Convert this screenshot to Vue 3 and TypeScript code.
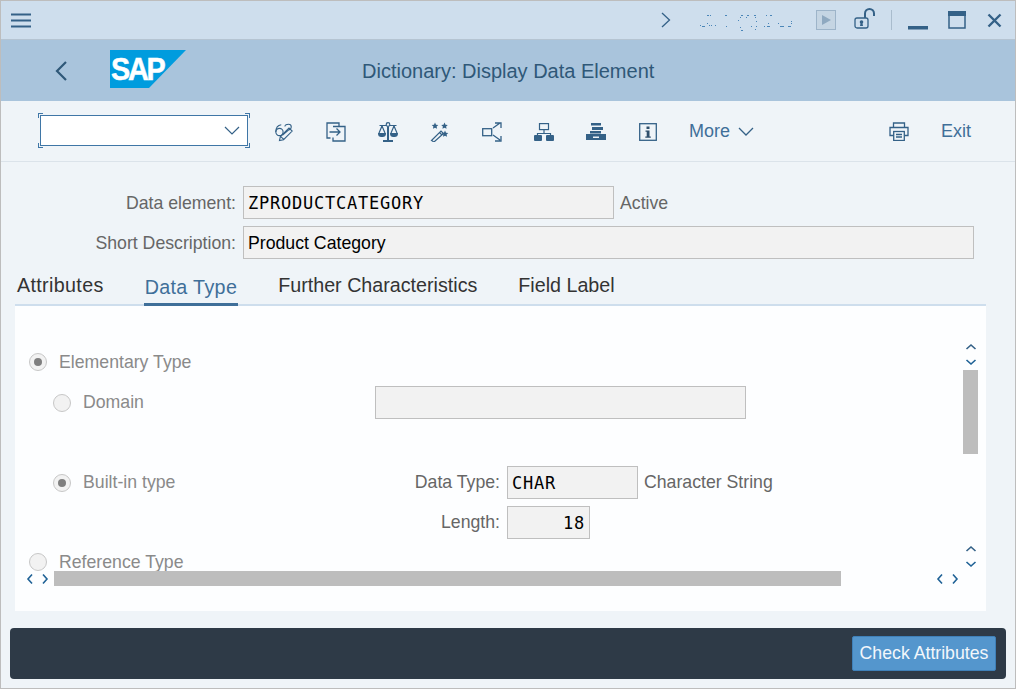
<template>
  <div class="window">
    <header class="titlebar">
      <svg class="menu" width="20" height="15" viewBox="0 0 20 15"><path d="M0 1.500h20M0 7.500h20M0 13.500h20" stroke="#346187" stroke-width="2" /></svg>
      <div class="spacer"></div>
      <svg class="next" width="10" height="16" viewBox="0 0 10 16"><path d="M1 1l7.500 7L1 15" fill="none" stroke="#346187" stroke-width="1.300" /></svg>
      <svg class="status" width="94" height="22" viewBox="0 0 94 22">
        <rect v-for="(d, i) in statusDots" :key="i" :x="d[0]" :y="d[1]" :width="d[2]" height="1" fill="#4b86b8" />
      </svg>
      <svg class="play" width="20" height="20" viewBox="0 0 20 20"><rect x=".5" y=".5" width="19" height="19" fill="#c5d5e3" stroke="#9db4c9" /><path d="M6 5l9 5-9 5z" fill="#8fa9c0" /></svg>
      <svg class="lock" width="22" height="22" viewBox="0 0 22 22"><path d="M11 10V5.500a4.500 4.500 0 0 1 9 0V8" fill="none" stroke="#346187" stroke-width="2" /><rect x="1" y="10" width="13" height="10" rx="2" fill="none" stroke="#346187" stroke-width="1.300" /><circle cx="7.500" cy="14" r="1.800" fill="#346187" /><path d="M6 18l.8-4h1.400l.8 4z" fill="#346187" /></svg>
      <span class="divider"></span>
      <svg class="minimize" width="20" height="4" viewBox="0 0 20 4"><rect width="20" height="3.500" fill="#346187" /></svg>
      <svg class="maximize" width="18" height="18" viewBox="0 0 18 18"><rect x="1" y="1" width="16" height="16" fill="none" stroke="#346187" stroke-width="1.500" /><rect x="0" y="0" width="18" height="5" fill="#346187" /></svg>
      <svg class="close" width="15" height="15" viewBox="0 0 15 15"><path d="M1.500 1.500l12 12M13.500 1.500l-12 12" stroke="#346187" stroke-width="2.400" /></svg>
    </header>

    <div class="appbar">
      <svg class="back" width="12" height="20" viewBox="0 0 12 20"><path d="M11 1L2 10l9 9" fill="none" stroke="#2f5878" stroke-width="2.200" /></svg>
      <div class="logo">
        <svg class="logo-bg" width="76" height="38" viewBox="0 0 76 38"><path d="M0 0h76L39 38H0z" fill="#009cde" /></svg>
        <span>SAP</span>
      </div>
      <h1>Dictionary: Display Data Element</h1>
    </div>

    <div class="toolbar">
      <div class="combo">
        <i class="tick tl"></i><i class="tick tr"></i><i class="tick bl"></i><i class="tick br"></i>
        <svg width="16" height="9" viewBox="0 0 16 9"><path d="M1 1l7 7 7-7" fill="none" stroke="#346187" stroke-width="1.200" /></svg>
      </div>
      <button class="tool">
        <svg width="22" height="20" viewBox="0 0 22 20" fill="none" stroke="#346187" stroke-width="1.200"><circle cx="6" cy="10" r="4" /><path d="M2 10C2 6 4 2.500 8 2M12 4c0-2 2-2.500 4-2.500s3 1.500 3 3-1 2.500-2 3.500" /><path d="M6 19.500l1-4.500 9.500-9.500 3.500 3.500-9.500 9.500zM7.500 15l3.500 3.500M9.500 13.500l8-7" /></svg>
      </button>
      <button class="tool">
        <svg width="20" height="20" viewBox="0 0 20 20" fill="none" stroke="#346187" stroke-width="1.300"><path d="M13 4.500V1H1v15h3.500" /><path d="M7 4.500h12V19H7v-3.500" /><path d="M3.500 10H14M10.500 6.500L14 10l-3.500 3.500" /></svg>
      </button>
      <button class="tool">
        <svg width="20" height="20" viewBox="0 0 20 20" fill="none" stroke="#346187" stroke-width="1.200"><circle cx="10" cy="2.500" r="1.800" /><path d="M10 4.500V18M5 19h10" stroke-width="2" /><path d="M1.500 3.500l6.500 0M12 3.500h6.500M4 4L1 11M4 4l3 7M16 4l-3 7M16 4l3 7" /><path d="M0 11h8c0 3-1 4-4 4s-4-1-4-4zM12 11h8c0 3-1 4-4 4s-4-1-4-4z" fill="#346187" stroke="none" /></svg>
      </button>
      <button class="tool">
        <svg width="20" height="20" viewBox="0 0 20 20" fill="none" stroke="#346187"><path d="M1.500 18.500L11 9l2.500 2.500L4 20z" stroke-width="1.200" /><path d="M9.500 10.500l2.500 2.500" stroke-width="1.200" /><path d="M5 .5l1 2.200 2.300.3-1.700 1.500.5 2.300L5 5.800 2.900 6.800l.5-2.300L1.700 3l2.300-.3zM14.500.5l1 2.200 2.300.3-1.700 1.500.5 2.300-2.100-1-2.100 1 .5-2.300L11.200 3l2.300-.3zM15 8.500l1 2.200 2.300.3-1.700 1.500.5 2.300-2.100-1-2.100 1 .5-2.300-1.700-1.500 2.300-.3z" fill="#346187" stroke="none" /></svg>
      </button>
      <button class="tool">
        <svg width="20" height="20" viewBox="0 0 20 20" fill="none" stroke="#346187" stroke-width="1.300"><rect x=".7" y="6.700" width="9" height="7" /><path d="M11 6l7-5M13 1h6v5M11 13l7 5M13 19h6v-5" /></svg>
      </button>
      <button class="tool">
        <svg width="20" height="18" viewBox="0 0 20 18" fill="none" stroke="#346187" stroke-width="1.200"><rect x="5.500" y=".6" width="9" height="6" /><path d="M10 7v3M3.500 13v-2.500h13V13" /><rect x="0" y="12" width="8" height="6" rx="1" fill="#346187" stroke="none" /><rect x="12" y="12" width="8" height="6" rx="1" fill="#346187" stroke="none" /></svg>
      </button>
      <button class="tool">
        <svg width="20" height="17" viewBox="0 0 20 17" fill="#346187"><rect x="5" y="0" width="10" height="2.500" /><rect x="6" y="4" width="11" height="3" /><rect x="4" y="8" width="11" height="2.500" /><path d="M0 11h20v6H0zM7 13.500v1.500h6v-1.500z" fill-rule="evenodd" /></svg>
      </button>
      <button class="tool">
        <svg width="18" height="18" viewBox="0 0 18 18"><rect x=".7" y=".7" width="16.600" height="16.600" fill="none" stroke="#346187" stroke-width="1.300" /><path d="M7.500 3.500h3v2.500h-3zM6.500 7.500h4v6h1.300v1.200H6.300v-1.200h1.400V8.700H6.500z" fill="#2f4f6b" /></svg>
      </button>
      <button class="more">More
        <svg width="16" height="9" viewBox="0 0 16 9"><path d="M1 1l7 7 7-7" fill="none" stroke="#346187" stroke-width="1.300" /></svg>
      </button>
      <div class="spacer"></div>
      <button class="tool print">
        <svg width="20" height="19" viewBox="0 0 20 19" fill="none" stroke="#346187" stroke-width="1.300"><path d="M4.500 5V1h11v4" /><path d="M4.500 13.500H1V5.500h18v8h-3.500" /><rect x="4.700" y="9.500" width="10.600" height="9" /><path d="M7 12.500h6M7 15h6" /></svg>
      </button>
      <button class="exit">Exit</button>
    </div>

    <main class="content">
      <div class="head-form">
        <label>Data element:</label>
        <div class="field-row">
          <div class="field mono name">ZPRODUCTCATEGORY</div>
          <span class="state">Active</span>
        </div>
        <label>Short Description:</label>
        <div class="field desc">Product Category</div>
      </div>

      <nav class="tabs">
        <span v-for="t in tabs" :key="t" class="tab" :class="{ active: t === 'Data Type', loose: t === 'Attributes' || t === 'Data Type' }">{{ t }}</span>
      </nav>

      <section class="panel">
        <div class="panel-main">
          <div class="viewport">
            <div class="radio-row top"><span class="radio on"></span><span class="rlabel">Elementary Type</span></div>
            <div class="radio-row sub domain">
              <span class="radio"></span><span class="rlabel wide">Domain</span>
              <div class="field blank"></div>
            </div>
            <div class="radio-row sub builtin">
              <span class="radio on"></span><span class="rlabel wide">Built-in type</span>
              <span class="flabel">Data Type:</span>
              <div class="field mono dtype">CHAR</div>
              <span class="dtext">Character String</span>
            </div>
            <div class="length-row">
              <span class="flabel">Length:</span>
              <div class="field mono len">18</div>
            </div>
            <div class="radio-row ref"><span class="radio"></span><span class="rlabel">Reference Type</span></div>
          </div>
          <div class="vbar">
            <svg class="arrows" width="12" height="24" viewBox="0 0 12 24"><path d="M1.500 6L6 2l4.500 4" fill="none" stroke="#346187" stroke-width="1.600" /><path d="M1.500 17l4.500 4 4.500-4" fill="none" stroke="#1f6296" stroke-width="1.600" /></svg>
            <div class="vthumb"></div>
            <div class="spacer"></div>
            <svg class="arrows" width="12" height="24" viewBox="0 0 12 24"><path d="M1.500 6L6 2l4.500 4" fill="none" stroke="#346187" stroke-width="1.600" /><path d="M1.500 17l4.500 4 4.500-4" fill="none" stroke="#1f6296" stroke-width="1.600" /></svg>
          </div>
        </div>
        <div class="hbar">
          <svg width="24" height="12" viewBox="0 0 24 12"><path d="M6 1.500L2 6l4 4.500" fill="none" stroke="#1f6296" stroke-width="1.600" /><path d="M17 1.500L21 6l-4 4.500" fill="none" stroke="#1f6296" stroke-width="1.600" /></svg>
          <div class="hthumb"></div>
          <svg width="24" height="12" viewBox="0 0 24 12"><path d="M6 1.500L2 6l4 4.500" fill="none" stroke="#1f6296" stroke-width="1.600" /><path d="M17 1.500L21 6l-4 4.500" fill="none" stroke="#1f6296" stroke-width="1.600" /></svg>
        </div>
      </section>

      <footer class="footer">
        <button class="check">Check Attributes</button>
      </footer>
    </main>
  </div>
</template>

<script setup lang="ts">
const tabs = ["Attributes", "Data Type", "Further Characteristics", "Field Label"];

// the status text in the title bar is dithered to noise in the reference
const statusDots: number[][] = [
  [7, 6, 2], [10, 6, 1], [25, 6, 2], [41, 6, 2], [40, 8, 1], [47, 6, 2], [54, 6, 2], [46, 8, 1], [55, 8, 1], [66, 6, 1], [70, 6, 2],
  [38, 11, 1], [56, 12, 1], [0, 16, 1], [2, 17, 3], [7, 14, 1], [9, 16, 1], [11, 16, 1], [15, 16, 1], [26, 17, 1],
  [40, 18, 1], [41, 21, 2], [51, 17, 1], [56, 17, 1], [55, 20, 1], [64, 17, 1], [67, 17, 3], [68, 14, 1],
  [78, 14, 1], [80, 17, 3], [83, 17, 1], [88, 17, 3], [91, 12, 1], [91, 14, 1], [90, 17, 1],
];
</script>

<style scoped>
.window {
  box-sizing: border-box;
  width: 1016px;
  height: 689px;
  display: flex;
  flex-direction: column;
  overflow: hidden;
  border: 1px solid #bdbdbd;
  background: #eff4f8;
  font-family: "Liberation Sans", Arial, sans-serif;
  font-size: 17.700px;
  color: #1f1f1f;
}
.spacer {
  flex: 1;
}
.titlebar {
  flex: none;
  height: 38px;
  display: flex;
  align-items: center;
  padding: 0 13px 0 10px;
  background: #cedeed;
  border-bottom: 1px solid #b5c4d2;
}
.next {
  margin-right: 29px;
}
.status {
  margin-right: 22px;
}
.play {
  margin-right: 18px;
}
.lock {
  margin-right: 15px;
  margin-top: -3px;
}
.divider {
  width: 1px;
  height: 20px;
  background: #a9bccd;
  margin-right: 16px;
}
.minimize {
  margin: 16px 20px 0 0;
}
.maximize {
  margin-right: 21px;
}
.appbar {
  flex: none;
  height: 61px;
  display: flex;
  align-items: center;
  background: #a9c4dc;
  padding-left: 54px;
}
.logo {
  position: relative;
  width: 76px;
  height: 38px;
  margin: -4px 0 0 43px;
  color: #fff;
}
.logo-bg {
  position: absolute;
  left: 0;
  top: 0;
}
.logo span {
  position: absolute;
  left: 1px;
  top: 1px;
  font-size: 32px;
  line-height: 36px;
  font-weight: 700;
  letter-spacing: -2.500px;
  -webkit-text-stroke: .5px #fff;
  transform: scaleX(.9);
  transform-origin: 0 50%;
}
.appbar h1 {
  margin: 2px 0 0 176px;
  font-size: 20px;
  font-weight: 400;
  color: #2f5878;
}
.toolbar {
  flex: none;
  height: 61px;
  display: flex;
  align-items: center;
  padding: 1px 44px 0 39px;
  border-bottom: 1px solid #dbe3ea;
  box-sizing: border-box;
  font-size: 18px;
}
.combo {
  position: relative;
  box-sizing: border-box;
  width: 208px;
  height: 31px;
  margin: -3px 26px 0 0;
  display: flex;
  align-items: center;
  justify-content: flex-end;
  padding-right: 7px;
  background: #fff;
  border: 1px solid #3f76a6;
}
.tick {
  position: absolute;
  width: 4px;
  height: 4px;
  border: 0 solid #3f76a6;
}
.tl { left: -3px; top: -3px; border-width: 1px 0 0 1px; }
.tr { right: -3px; top: -3px; border-width: 1px 1px 0 0; }
.bl { left: -3px; bottom: -3px; border-width: 0 0 1px 1px; }
.br { right: -3px; bottom: -3px; border-width: 0 1px 1px 0; }
button {
  padding: 0;
  border: 0;
  background: none;
  font: inherit;
  display: flex;
  align-items: center;
}
.tool {
  width: 20px;
  margin-right: 32px;
  justify-content: center;
}
.more {
  margin-left: -1px;
  gap: 8px;
  color: #3f6f99;
}
.print {
  margin-right: 32px;
}
.exit {
  color: #3f6f99;
}
.content {
  flex: 1;
  display: flex;
  flex-direction: column;
  min-height: 0;
}
.head-form {
  display: grid;
  grid-template-columns: 235px 1fr;
  grid-auto-rows: 33px;
  row-gap: 7px;
  padding-top: 24px;
  align-items: center;
}
.head-form label {
  padding-top: 1px;
  text-align: right;
  color: #666;
}
.field-row {
  display: flex;
  align-items: center;
}
.field {
  box-sizing: border-box;
  height: 33px;
  margin-left: 7px;
  padding: 1px 4px 0;
  display: flex;
  align-items: center;
  background: #f2f2f2;
  border: 1px solid #bfbfbf;
  color: #000;
}
.mono {
  font-family: "DejaVu Sans Mono", monospace;
  font-size: 17px;
  letter-spacing: .77px;
}
.name {
  width: 371px;
}
.state {
  margin: 1px 0 0 6px;
  color: #666;
}
.desc {
  width: 731px;
}
.tabs {
  display: flex;
  height: 47px;
  box-sizing: border-box;
  margin: 0 29px 0 14px;
  padding-left: 1px;
  gap: 39px;
  align-items: flex-end;
  border-bottom: 2px solid #cedeed;
  font-size: 19.700px;
}
.tab {
  position: relative;
  padding: 0 1px;
  height: 30px;
  color: #333;
}
.tab.loose {
  letter-spacing: .35px;
}
.tab.active {
  color: #3f6f99;
  top: 2px;
  border-bottom: 3px solid #3f6f99;
  padding-top: 2px;
  height: 27px;
}
.panel {
  box-sizing: border-box;
  height: 305px;
  margin: 0 29px 0 14px;
  padding-bottom: 25px;
  display: flex;
  flex-direction: column;
  background: #fdfeff;
}
.panel-main {
  flex: 1;
  min-height: 0;
  display: flex;
}
.viewport {
  flex: 1;
  overflow: hidden;
  padding: 44px 0 0 14px;
  color: #8a8a8a;
}
.radio-row {
  display: flex;
  align-items: center;
  height: 24px;
}
.radio {
  box-sizing: border-box;
  width: 18px;
  height: 18px;
  flex: none;
  margin-right: 12px;
  border: 1px solid #c7c7c7;
  border-radius: 50%;
  background: #f2f2f2;
  display: flex;
  align-items: center;
  justify-content: center;
}
.radio.on::after {
  content: "";
  width: 8px;
  height: 8px;
  border-radius: 50%;
  background: #7f7f7f;
}
.sub {
  padding-left: 24px;
}
.domain {
  margin-top: 12px;
  height: 33px;
}
.builtin {
  margin-top: 47px;
  height: 33px;
}
.wide {
  width: 292px;
}
.domain .blank {
  width: 371px;
  margin-left: 0;
}
.flabel {
  color: #666;
  width: 125px;
  text-align: right;
}
.dtype {
  width: 131px;
}
.dtext {
  margin-left: 6px;
  color: #666;
}
.length-row {
  display: flex;
  align-items: center;
  height: 33px;
  margin-top: 7px;
  padding-left: 346px;
}
.len {
  width: 83px;
  justify-content: flex-end;
}
.ref {
  margin-top: 11px;
  height: 24px;
}
.vbar {
  flex: none;
  width: 15px;
  display: flex;
  flex-direction: column;
  align-items: center;
  padding: 37px 0 2px;
  margin-right: 8px;
}
.arrows {
  flex: none;
  margin-bottom: 3px;
}
.arrows:last-child {
  margin-bottom: 0;
}
.vthumb {
  flex: none;
  width: 100%;
  height: 84px;
  background: #bdbdbd;
}
.hbar {
  flex: none;
  height: 15px;
  display: flex;
  align-items: center;
  padding-left: 11px;
}
.hthumb {
  flex: none;
  width: 787px;
  height: 15px;
  margin: 0 95px 0 4px;
  background: #bdbdbd;
}
.footer {
  flex: none;
  box-sizing: border-box;
  height: 51px;
  margin: 17px 9px 0;
  padding-right: 10px;
  display: flex;
  align-items: center;
  justify-content: flex-end;
  background: #2e3a47;
  border-radius: 4px;
}
.check {
  height: 35px;
  width: 144px;
  box-sizing: border-box;
  justify-content: center;
  background: #5496cd;
  border: 1px solid #3f80b8;
  border-radius: 2px;
  color: #f2f7fb;
}
</style>

<style>
html, body {
  margin: 0;
  background: #fff;
}
</style>
